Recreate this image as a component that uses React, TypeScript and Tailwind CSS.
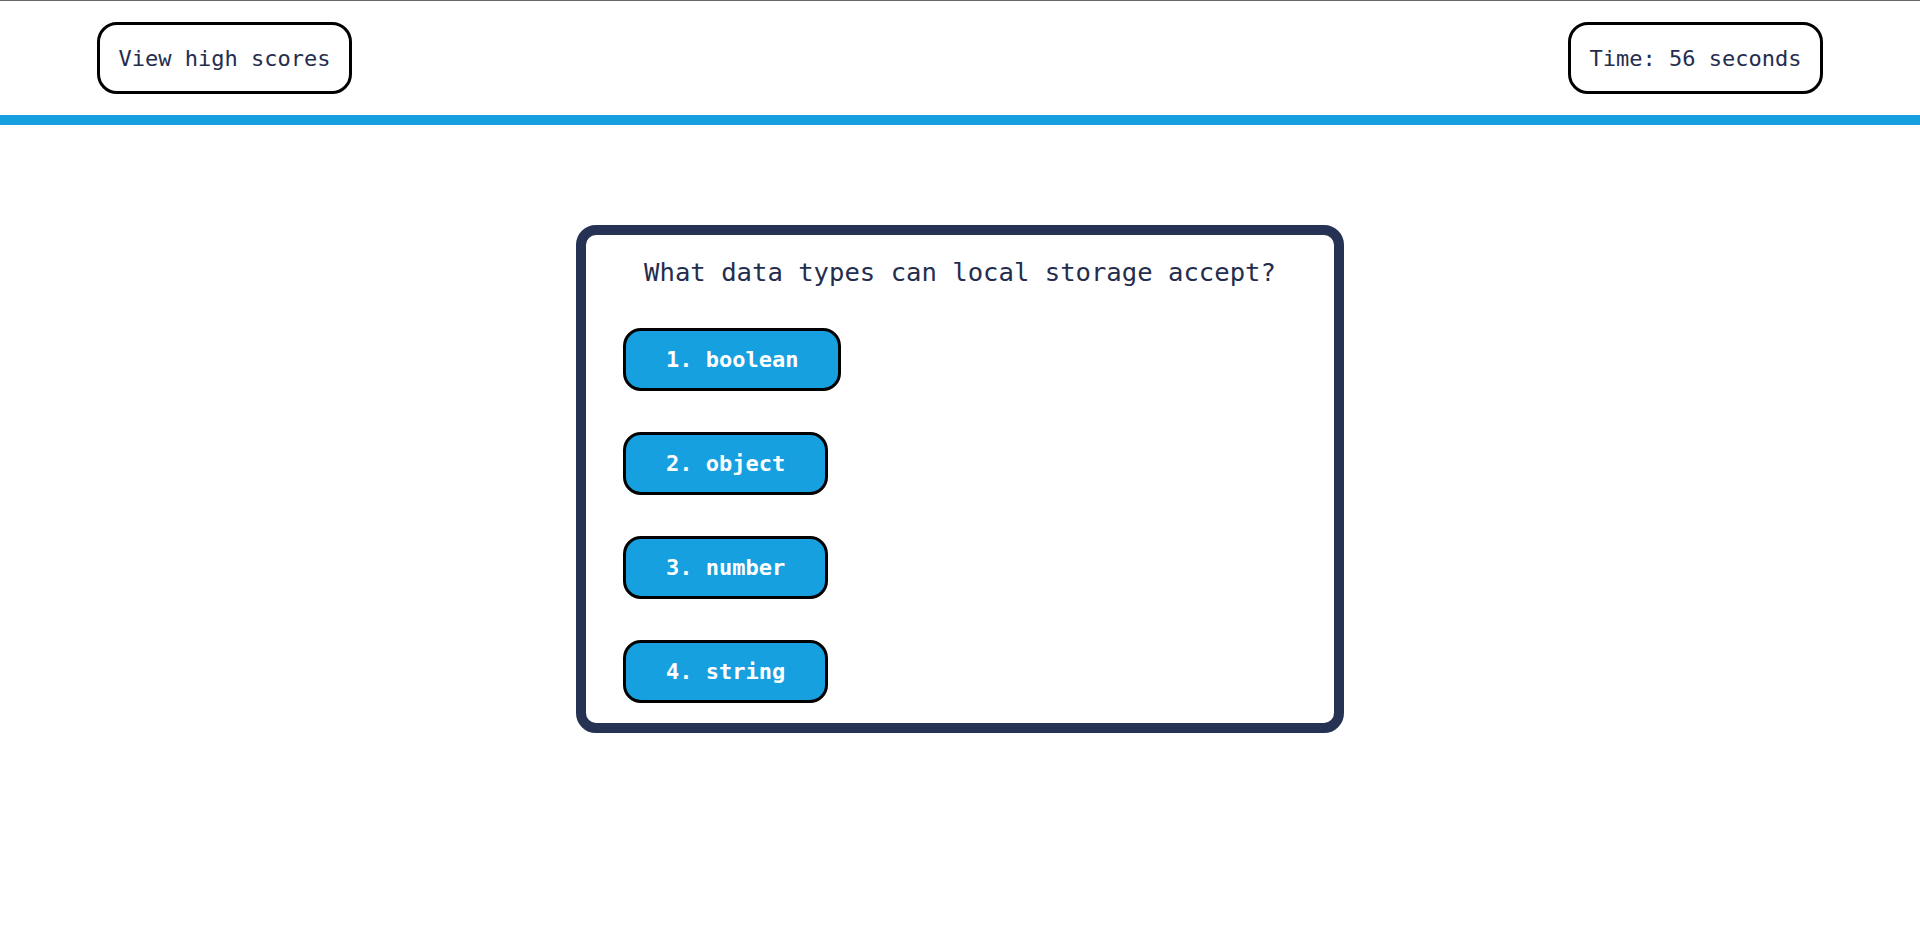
import React from 'react'

const choices = ['1. boolean', '2. object', '3. number', '4. string']

export default function App() {
  const [time] = React.useState(56)

  return (
    <div className="min-h-[936px] bg-white font-['DejaVu_Sans_Mono',monospace] text-[#242d4d]">
      <header className="flex justify-between items-start border-t border-[#666666] px-[97px] pt-[21px] pb-[21px]">
        <button className="flex items-center justify-center h-[72px] w-[255px] rounded-[20px] border-[3px] border-black bg-white text-[22px]">
          View high scores
        </button>
        <div className="flex items-center justify-center h-[72px] w-[255px] rounded-[20px] border-[3px] border-black bg-white text-[22px]">
          Time: {time} seconds
        </div>
      </header>
      <div className="h-[10px] bg-[#17a0e0]" />

      <main className="flex justify-center pt-[100px]">
        <section className="w-[768px] rounded-[20px] border-[10px] border-[#253254] bg-white pt-[18px] pb-[20px] pl-[37px] pr-[37px]">
          <h2 className="text-center text-[25.6px] leading-[38px]">
            What data types can local storage accept?
          </h2>
          <div className="mt-[37px] flex flex-col items-start gap-[41px]">
            {choices.map((c) => (
              <button
                key={c}
                className="flex items-center h-[63px] px-[40px] rounded-[18px] border-[3px] border-black bg-[#17a0e0] text-white font-bold text-[22px]"
              >
                {c}
              </button>
            ))}
          </div>
        </section>
      </main>
    </div>
  )
}
